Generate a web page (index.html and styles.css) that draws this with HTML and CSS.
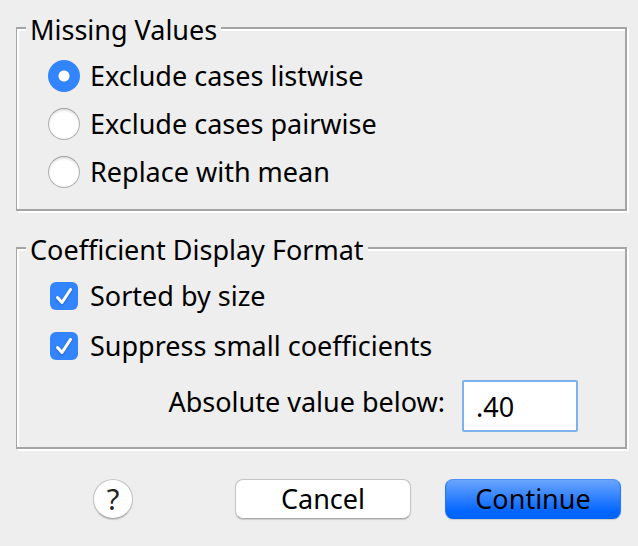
FILE: index.html
```
<!DOCTYPE html>
<html lang="en">
<head>
    <meta charset="UTF-8">
    <meta name="viewport" content="width=device-width, initial-scale=1.0">
    <title>Factor Analysis: Options</title>
    <link rel="stylesheet" href="styles.css">
</head>
<body>
    <form class="dialog">
        <fieldset class="group">
            <legend>Missing Values</legend>
            <label class="option">
                <input class="radio" type="radio" name="missing" value="listwise" checked>
                Exclude cases listwise
            </label>
            <label class="option">
                <input class="radio" type="radio" name="missing" value="pairwise">
                Exclude cases pairwise
            </label>
            <label class="option">
                <input class="radio" type="radio" name="missing" value="mean">
                Replace with mean
            </label>
        </fieldset>

        <fieldset class="group group-format">
            <legend>Coefficient Display Format</legend>
            <label class="option option-check">
                <span class="check">
                    <input class="check-input" type="checkbox" name="sorted" checked>
                    <svg class="check-mark" viewBox="0 0 28 28" aria-hidden="true"><path d="M7.5 15.5 L12 20.5 L20.5 7.5"/></svg>
                </span>
                Sorted by size
            </label>
            <label class="option option-check">
                <span class="check">
                    <input class="check-input" type="checkbox" name="suppress" checked>
                    <svg class="check-mark" viewBox="0 0 28 28" aria-hidden="true"><path d="M7.5 15.5 L12 20.5 L20.5 7.5"/></svg>
                </span>
                Suppress small coefficients
            </label>
            <div class="field">
                <label for="threshold">Absolute value below:</label>
                <input class="field-input" type="text" id="threshold" name="threshold" value=".40">
            </div>
        </fieldset>

        <div class="actions">
            <button class="help" type="button" aria-label="Help">?</button>
            <button class="btn" type="button">Cancel</button>
            <button class="btn btn-primary" type="submit">Continue</button>
        </div>
    </form>
</body>
</html>
```
FILE: styles.css
```
* {
    margin: 0;
    padding: 0;
    box-sizing: border-box;
}

body {
    background: #eee;
    color: #000;
    font-family: "Lucida Grande", "Noto Sans", sans-serif;
    font-size: 27px;
    line-height: 34px;
}

button,
input {
    font: inherit;
    color: inherit;
}

.dialog {
    padding: 9px 11px 24px 16px;
}

/* etched border: grey line with a white one below and to the right */
.group {
    min-width: 0;
    padding: 5px 9px 13px;
    border: 2px solid #a5a5a5;
    border-left-width: 1px;
    box-shadow: 2px 2px 0 #fff, inset 2px 2px 0 #fff;
}

.group-format {
    margin-top: 18px;
    padding-top: 4px;
    padding-bottom: 15px;
}

.group legend {
    padding: 4px 4px 0;
    background: #eee;
}

.option {
    display: flex;
    align-items: center;
    gap: 10px;
    height: 48px;
    padding-left: 22px;
}

.option-check {
    gap: 12px;
    height: 50px;
    padding-left: 24px;
}

.radio {
    appearance: none;
    flex: none;
    width: 32px;
    height: 32px;
    border: 1px solid #b0b0b0;
    border-top-color: #979797;
    border-radius: 50%;
    background: #fff;
    box-shadow: inset 0 2px 2px rgba(0, 0, 0, 0.1);
}

.radio:checked {
    border: 0;
    background: radial-gradient(circle, #fff 5px, #3385ff 6px);
    box-shadow: none;
}

.check {
    display: grid;
    flex: none;
    width: 28px;
    height: 28px;
}

.check-input,
.check-mark {
    grid-area: 1 / 1;
    width: 28px;
    height: 28px;
}

.check-input {
    appearance: none;
    border: 1px solid #b0b0b0;
    border-radius: 6px;
    background: #fff;
}

.check-input:checked {
    border: 0;
    background: #3385ff;
}

.check-mark {
    z-index: 1;
    fill: none;
    stroke: #fff;
    stroke-width: 3;
    stroke-linecap: round;
    stroke-linejoin: round;
    filter: drop-shadow(0 1px 1px rgba(0, 0, 0, 0.25));
    pointer-events: none;
}

.check-input:not(:checked) + .check-mark {
    display: none;
}

.field {
    display: flex;
    align-items: center;
    justify-content: flex-end;
    gap: 17px;
    margin-top: 9px;
    padding-right: 38px;
}

.field label {
    padding-bottom: 8px;
}

.field-input {
    width: 116px;
    height: 52px;
    padding: 0 12px;
    border: 2px solid #7eb1ee;
    border-radius: 2px;
    background: #fff;
    outline: none;
}

.actions {
    display: flex;
    align-items: center;
    gap: 34px;
    margin-top: 30px;
    padding: 0 6px 0 77px;
}

.help,
.btn {
    height: 40px;
    border: 1px solid #c4c4c4;
    border-bottom-color: #aaa;
    background: #fff;
    box-shadow: 0 1px 1px rgba(0, 0, 0, 0.15);
}

.help {
    width: 40px;
    margin-right: auto;
    border-radius: 50%;
    color: #222;
    font-size: 29px;
}

.btn {
    width: 176px;
    border-radius: 8px;
}

.btn-primary {
    border-color: #4a90f5 #2478f5 #0062f5;
    background: linear-gradient(#6aa5ff, #0064ff 85%);
}
```
